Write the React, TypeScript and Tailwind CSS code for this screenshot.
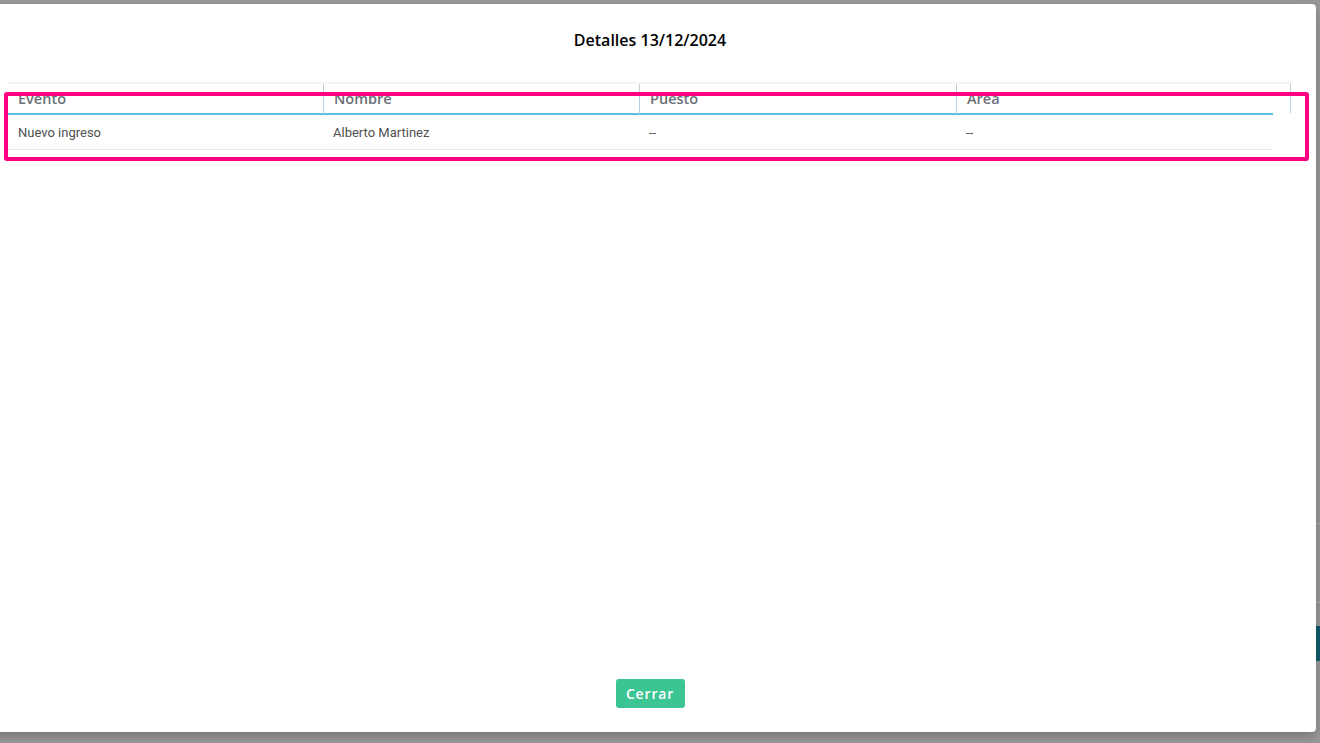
import React from 'react';

interface Row {
  evento: string;
  nombre: string;
  puesto: string;
  area: string;
}

const rows: Row[] = [
  { evento: 'Nuevo ingreso', nombre: 'Alberto Martinez', puesto: '--', area: '--' },
];

const headFont = { fontFamily: '"Open Sans", "Liberation Sans", sans-serif' };
const bodyFont = { fontFamily: 'Roboto, "Liberation Sans", Arial, sans-serif' };

const App: React.FC = () => {
  return (
    <div className="relative w-[1320px] h-[743px] overflow-hidden bg-[#9a9a9a] flex pt-[4px] pb-[11px] pr-[4px]">
      {/* page behind the overlay, barely visible at the right edge */}
      <div className="absolute right-0 top-[523px] w-[4px] h-px bg-[#b0b0b0]" />
      <div className="absolute right-0 top-[602px] w-[4px] h-px bg-[#b0b0b0]" />
      <div className="absolute right-0 top-[626px] w-[4px] h-[35px] bg-[#0f5d6c]" />

      {/* Modal (its left edge runs off the screen) */}
      <div className="relative flex-1 -ml-[16px] flex flex-col bg-white rounded-r-[4px] shadow-[0_4px_12px_rgba(0,0,0,0.25)]">
        <div className="h-[72px] flex items-center justify-center">
          <h2 className="text-[16px] font-semibold text-black" style={headFont}>
            Detalles 13/12/2024
          </h2>
        </div>

        <div className="pl-[24px] mt-[6px]">
          <div className="w-[1283px] border-t-2 border-[#f3f3f3]">
            <div className="flex h-[31px] text-[14.5px] font-semibold text-[#6b7078]" style={headFont}>
              <div className="w-[315px] flex items-center pl-[10px] border-b-2 border-b-[#5bc0de]">Evento</div>
              <div className="w-[316px] flex items-center pl-[10px] border-l border-l-[#b8cfe0] border-b-2 border-b-[#5bc0de]">Nombre</div>
              <div className="w-[317px] flex items-center pl-[10px] border-l border-l-[#b8cfe0] border-b-2 border-b-[#5bc0de]">Puesto</div>
              <div className="w-[317px] flex items-center pl-[10px] border-l border-l-[#b8cfe0] border-b-2 border-b-[#5bc0de]">Area</div>
              <div className="w-[18px] border-r border-r-[#b8cfe0] mb-[2px]" />
            </div>
            {rows.map((r, i) => (
              <div
                key={i}
                className="flex w-[1265px] h-[35px] pt-px border-b border-[#e8e8e8] text-[13px] text-[#505050]"
                style={bodyFont}
              >
                <div className="w-[315px] flex items-center pl-[10px]">{r.evento}</div>
                <div className="w-[316px] flex items-center pl-[10px]">{r.nombre}</div>
                <div className="w-[317px] flex items-center pl-[10px]">{r.puesto}</div>
                <div className="w-[317px] flex items-center pl-[10px]">{r.area}</div>
              </div>
            ))}
          </div>
        </div>

        <div className="flex-1" />

        <div className="h-[64px] flex justify-center pt-[11px]">
          <button
            className="h-[29px] w-[69px] rounded-[3px] bg-[#3bc593] text-white text-[14px] font-semibold tracking-[0.06em]"
            style={headFont}
          >
            Cerrar
          </button>
        </div>

        {/* highlight frame */}
        <div className="absolute left-[20px] top-[88px] w-[1305px] h-[69px] border-4 border-[#ff0080] rounded-[3px] pointer-events-none" />
      </div>
    </div>
  );
};

export default App;
